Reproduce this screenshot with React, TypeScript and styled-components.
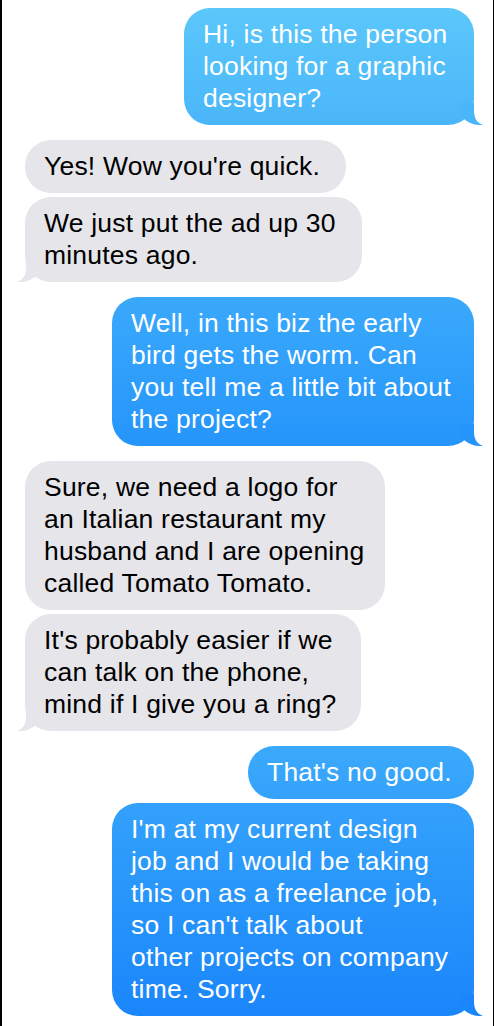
import React from "react";
import styled, { createGlobalStyle } from "styled-components";

interface IMessage {
  lines: string[];
  width: number;
  from: string;
  to: string;
}
interface IGroup {
  mine: boolean;
  messages: IMessage[];
}
interface IStyle {
  $mine?: boolean;
  $from?: string;
  $to?: string;
  $width?: number;
}

const GRAY = "#e5e5ea";

const GlobalStyle = createGlobalStyle`
  html, body {
    margin: 0;
    padding: 0;
    background-color: #ffffff;
  }
  * {
    box-sizing: border-box;
  }
`;

const Screen = styled.div`
  display: flex;
  flex-direction: column;
  gap: 15px;
  min-height: 100vh;
  padding: 8px 19px 10px 23px;
  background-color: #ffffff;
  border-left: 2px solid #000000;
  border-right: 1px solid #000000;
  font-family: "Liberation Sans", Arial, sans-serif;
`;

const Group = styled.div<IStyle>`
  display: flex;
  flex-direction: column;
  gap: 4px;
  align-items: ${(props) => (props.$mine ? "flex-end" : "flex-start")};
`;

const Bubble = styled.div<IStyle>`
  position: relative;
  width: ${(props) => props.$width}px;
  padding: 10px 18px 11px 19px;
  border-radius: 26px;
  font-size: 26.5px;
  line-height: 32px;
  letter-spacing: 0.2px;
  color: ${(props) => (props.$mine ? "#ffffff" : "#000000")};
  background: ${(props) =>
    props.$mine
      ? `linear-gradient(to bottom, ${props.$from}, ${props.$to})`
      : GRAY};
`;

const Line = styled.span`
  display: block;
  white-space: nowrap;
`;

const TailSvg = styled.svg<IStyle>`
  position: absolute;
  bottom: 0;
  width: 22px;
  height: 22px;
  ${(props) =>
    props.$mine ? "right: -9px;" : "left: -8px; transform: scaleX(-1);"}
`;

const Tail = ({ mine, color }: { mine: boolean; color: string }) => (
  <TailSvg $mine={mine} viewBox="0 0 22 22">
    <path
      d="M0 0 H13 V8 C13 15 16 20 22 22 C16 22.6 9 21 3 16 L0 16 Z"
      fill={color}
    />
  </TailSvg>
);

const groups: IGroup[] = [
  {
    mine: true,
    messages: [
      {
        lines: ["Hi, is this the person", "looking for a graphic", "designer?"],
        width: 290,
        from: "#5bc7fa",
        to: "#4ab6fa",
      },
    ],
  },
  {
    mine: false,
    messages: [
      { lines: ["Yes! Wow you're quick."], width: 321, from: GRAY, to: GRAY },
      {
        lines: ["We just put the ad up 30", "minutes ago."],
        width: 337,
        from: GRAY,
        to: GRAY,
      },
    ],
  },
  {
    mine: true,
    messages: [
      {
        lines: [
          "Well, in this biz the early",
          "bird gets the worm. Can",
          "you tell me a little bit about",
          "the project?",
        ],
        width: 362,
        from: "#3aa9fb",
        to: "#2595fb",
      },
    ],
  },
  {
    mine: false,
    messages: [
      {
        lines: [
          "Sure, we need a logo for",
          "an Italian restaurant my",
          "husband and I are opening",
          "called Tomato Tomato.",
        ],
        width: 360,
        from: GRAY,
        to: GRAY,
      },
      {
        lines: [
          "It's probably easier if we",
          "can talk on the phone,",
          "mind if I give you a ring?",
        ],
        width: 336,
        from: GRAY,
        to: GRAY,
      },
    ],
  },
  {
    mine: true,
    messages: [
      { lines: ["That's no good."], width: 226, from: "#3ba9fb", to: "#34a2fb" },
      {
        lines: [
          "I'm at my current design",
          "job and I would be taking",
          "this on as a freelance job,",
          "so I can't talk about",
          "other projects on company",
          "time. Sorry.",
        ],
        width: 362,
        from: "#33a1fb",
        to: "#1a86fb",
      },
    ],
  },
];

const App = () => {
  return (
    <>
      <GlobalStyle />
      <Screen>
        {groups.map((group, gi) => (
          <Group key={gi} $mine={group.mine}>
            {group.messages.map((msg, mi) => (
              <Bubble
                key={mi}
                $mine={group.mine}
                $width={msg.width}
                $from={msg.from}
                $to={msg.to}
              >
                {msg.lines.map((line, li) => (
                  <Line key={li}>{line}</Line>
                ))}
                {mi === group.messages.length - 1 && (
                  <Tail mine={group.mine} color={msg.to} />
                )}
              </Bubble>
            ))}
          </Group>
        ))}
      </Screen>
    </>
  );
};

export default App;
